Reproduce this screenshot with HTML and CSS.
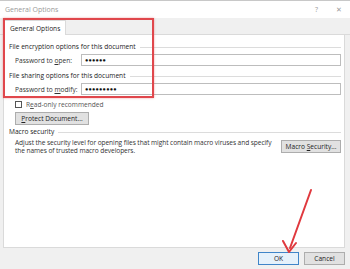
FILE: index.html
```html
<!DOCTYPE html>
<html lang="en">
<head>
    <meta charset="UTF-8">
    <title>General Options</title>
    <link rel="stylesheet" href="styles.css">
</head>
<body>
    <div class="dialog">
        <div class="titlebar">
            <span class="title">General Options</span>
            <span class="title-btns"><span>?</span><span>✕</span></span>
        </div>

        <div class="tabs">
            <div class="tab">General Options</div>
        </div>

        <div class="panel">
            <div class="group-title">File encryption options for this document</div>
            <div class="field">
                <label>Password to <u>o</u>pen:</label>
                <div class="input">●●●●●●</div>
            </div>
            <div class="group-title">File sharing options for this document</div>
            <div class="field">
                <label>Password to <u>m</u>odify:</label>
                <div class="input">●●●●●●●●●</div>
            </div>
            <div class="check">
                <span class="box"></span><span>R<u>e</u>ad-only recommended</span>
            </div>
            <div class="btn protect"><span><u>P</u>rotect Document...</span></div>

            <div class="group-title macro">Macro security</div>
            <div class="macro-row">
                <p>Adjust the security level for opening files that might contain macro viruses and specify the names of trusted macro developers.</p>
                <div class="btn"><span>Macro <u>S</u>ecurity...</span></div>
            </div>
        </div>

        <div class="footer">
            <div class="btn ok">OK</div>
            <div class="btn">Cancel</div>
        </div>
    </div>

    <!-- annotations -->
    <div class="highlight"></div>
    <svg class="arrow" width="350" height="269" viewBox="0 0 350 269">
        <line x1="311" y1="190" x2="290" y2="248" stroke="#e0393e" stroke-width="2" stroke-linecap="round"/>
        <polyline points="283,241 289,252 296,243" fill="none" stroke="#e0393e" stroke-width="2" stroke-linecap="round" stroke-linejoin="round"/>
    </svg>
</body>
</html>
```

FILE: styles.css
```css
* {
    margin: 0;
    padding: 0;
    box-sizing: border-box;
}

body {
    width: 350px;
    height: 269px;
    overflow: hidden;
    background: #f0f0f0;
    font-family: 'Open Sans', 'Noto Sans', sans-serif;
    font-size: 6.6px;
    color: #333;
    position: relative;
}

.dialog {
    display: flex;
    flex-direction: column;
    height: 269px;
}

.titlebar {
    height: 18px;
    background: #fff;
    border-top: 1px solid #c8c8c8;
    display: flex;
    align-items: center;
    justify-content: space-between;
    padding: 0 8px 0 5px;
    color: #9a9a9a;
    font-size: 7px;
}

.title-btns {
    display: flex;
    gap: 18px;
    font-size: 7px;
}

.tabs {
    height: 17px;
    padding: 2px 0 0 4px;
    display: flex;
    border-bottom: 1px solid #dadada;
}

.tab {
    background: #fff;
    border: 1px solid #dadada;
    border-bottom: none;
    padding: 3px 5px 0;
    white-space: nowrap;
    color: #222;
    margin-bottom: -1px;
}

.panel {
    background: #fff;
    border: 1px solid #dadada;
    border-top: none;
    margin: 0 5px 0 3px;
    height: 213px;
    padding: 7px 3px 0 5px;
}

.group-title {
    display: flex;
    align-items: center;
    gap: 4px;
    color: #222;
    height: 9px;
}

.group-title::after {
    content: "";
    flex: 1;
    border-top: 1px solid #dcdcdc;
    margin-top: 1px;
}

.field {
    display: flex;
    align-items: center;
    padding-left: 6px;
    margin: 3px 0 5px;
}

.field label {
    width: 66px;
    color: #333;
}

.input {
    flex: 1;
    height: 12px;
    border: 1px solid #bdbdbd;
    font-size: 5.5px;
    letter-spacing: 0.2px;
    padding: 0 3px;
    line-height: 10px;
    color: #111;
}

.check {
    display: flex;
    align-items: center;
    gap: 4px;
    padding-left: 6px;
    color: #555;
}

.box {
    width: 7px;
    height: 7px;
    border: 1px solid #555;
    background: #fff;
}

.btn {
    height: 13px;
    border: 1px solid #adadad;
    background: #e1e1e1;
    display: flex;
    align-items: center;
    justify-content: center;
    color: #222;
    padding: 0 4px;
    white-space: nowrap;
}

.protect {
    width: 74px;
    margin: 3px 0 0 6px;
}

.macro {
    margin-top: 2px;
}

.macro-row {
    display: flex;
    align-items: flex-start;
    gap: 5px;
    padding-left: 6px;
    margin-top: 3px;
}

.macro-row p {
    flex: 1;
    line-height: 7.5px;
    letter-spacing: -0.08px;
}

.macro-row .btn {
    width: 60px;
    margin-top: 1px;
}

.footer {
    flex: 1;
    display: flex;
    justify-content: flex-end;
    align-items: center;
    gap: 5px;
    padding: 0 5px 0 0;
}

.footer .btn {
    width: 41px;
    height: 13px;
}

.footer .ok {
    border-color: #3f85c9;
    background: #e5f1fb;
}

.highlight {
    position: absolute;
    left: 3px;
    top: 18px;
    width: 151px;
    height: 80px;
    border: 2px solid #e0474c;
    box-shadow: 0 0 2px rgba(224, 71, 76, 0.5);
}

.arrow {
    position: absolute;
    left: 0;
    top: 0;
}
```
